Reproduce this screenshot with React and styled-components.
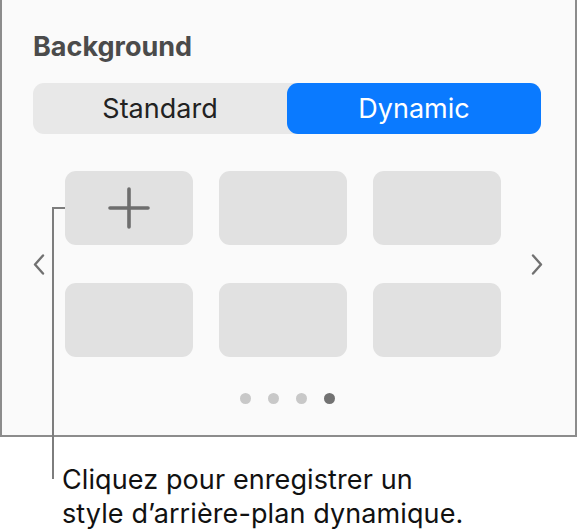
import React from "react";
import styled, { createGlobalStyle } from "styled-components";

const GlobalStyle = createGlobalStyle`
  html, body {
    margin: 0;
    padding: 0;
    background: #ffffff;
  }
  body {
    font-family: Inter, "Noto Sans", "Liberation Sans", sans-serif;
    -webkit-font-smoothing: antialiased;
  }
`;

const tiles = [true, false, false, false, false, false];
const pages = 4;
const currentPage = 3;

export default function App() {
  return (
    <>
      <GlobalStyle />
      <Page>
        <Panel>
          <Title>Background</Title>
          <Segmented>
            <Segment>Standard</Segment>
            <Segment active>Dynamic</Segment>
          </Segmented>
          <Gallery>
            <Arrow side="left">
              <Chevron dir="left" />
            </Arrow>
            <TileGrid>
              {tiles.map((isAdd, i) => (
                <Tile key={i}>{isAdd && <PlusIcon />}</Tile>
              ))}
            </TileGrid>
            <Arrow side="right">
              <Chevron dir="right" />
            </Arrow>
          </Gallery>
          <Dots>
            {Array.from({ length: pages }).map((_, i) => (
              <Dot key={i} active={i === currentPage} />
            ))}
          </Dots>
        </Panel>
        <Callout>
          Cliquez pour enregistrer un
          <br />
          style d’arrière-plan dynamique.
        </Callout>
        <Leader />
      </Page>
    </>
  );
}

function Chevron({ dir }) {
  const d = dir === "left" ? "M10 1.5 L2 10.5 L10 19.5" : "M2 1.5 L10 10.5 L2 19.5";
  return (
    <svg width="12" height="21" viewBox="0 0 12 21" fill="none">
      <path d={d} stroke="#717171" strokeWidth="2.4" strokeLinecap="round" strokeLinejoin="round" />
    </svg>
  );
}

function PlusIcon() {
  return (
    <svg width="42" height="42" viewBox="0 0 42 42" fill="none">
      <path d="M21 2 V40 M2 21 H40" stroke="#6e6e6e" strokeWidth="3.6" strokeLinecap="round" />
    </svg>
  );
}

const Page = styled.div`
  position: relative;
  width: 577px;
  height: 531px;
  overflow: hidden;
`;

const Panel = styled.div`
  box-sizing: border-box;
  width: 577px;
  height: 437px;
  background: #fafafa;
  border: 2px solid #8c8c8c;
  border-top: none;
  padding: 31px 34px 0 31px;
`;

const Title = styled.div`
  font-size: 27px;
  font-weight: 700;
  color: #4b4b4b;
  line-height: 32px;
`;

const Segmented = styled.div`
  margin-top: 20px;
  height: 51px;
  display: grid;
  grid-template-columns: 1fr 1fr;
  background: #e8e8e8;
  border-radius: 11px;
`;

const Segment = styled.div`
  display: flex;
  align-items: center;
  justify-content: center;
  border-radius: 11px;
  font-size: 27px;
  color: ${(p) => (p.active ? "#ffffff" : "#222222")};
  background: ${(p) => (p.active ? "#0a7aff" : "transparent")};
`;

const Gallery = styled.div`
  margin-top: 37px;
  display: grid;
  grid-template-columns: 32px 436px 42px;
  align-items: center;
`;

const Arrow = styled.div`
  display: flex;
  align-items: center;
  height: 22px;
  justify-content: ${(p) => (p.side === "left" ? "flex-start" : "flex-end")};
`;

const TileGrid = styled.div`
  display: grid;
  grid-template-columns: repeat(3, 128px);
  grid-auto-rows: 74px;
  column-gap: 26px;
  row-gap: 38px;
`;

const Tile = styled.div`
  background: #e1e1e1;
  border-radius: 11px;
  display: flex;
  align-items: center;
  justify-content: center;
`;

const Dots = styled.div`
  margin-top: 36px;
  display: flex;
  justify-content: center;
  gap: 17px;
`;

const Dot = styled.div`
  width: 11px;
  height: 11px;
  border-radius: 50%;
  background: ${(p) => (p.active ? "#727272" : "#c8c8c8")};
`;

const Callout = styled.div`
  margin: 26px 0 0 62px;
  font-size: 27px;
  line-height: 34px;
  letter-spacing: 0.1px;
  color: #111111;
`;

/* leader line from the add tile down to the caption */
const Leader = styled.div`
  position: absolute;
  left: 52px;
  top: 207px;
  width: 13px;
  height: 272px;
  border-left: 2px solid #7d7d7d;
  border-top: 2px solid #7d7d7d;
  box-sizing: border-box;
`;
